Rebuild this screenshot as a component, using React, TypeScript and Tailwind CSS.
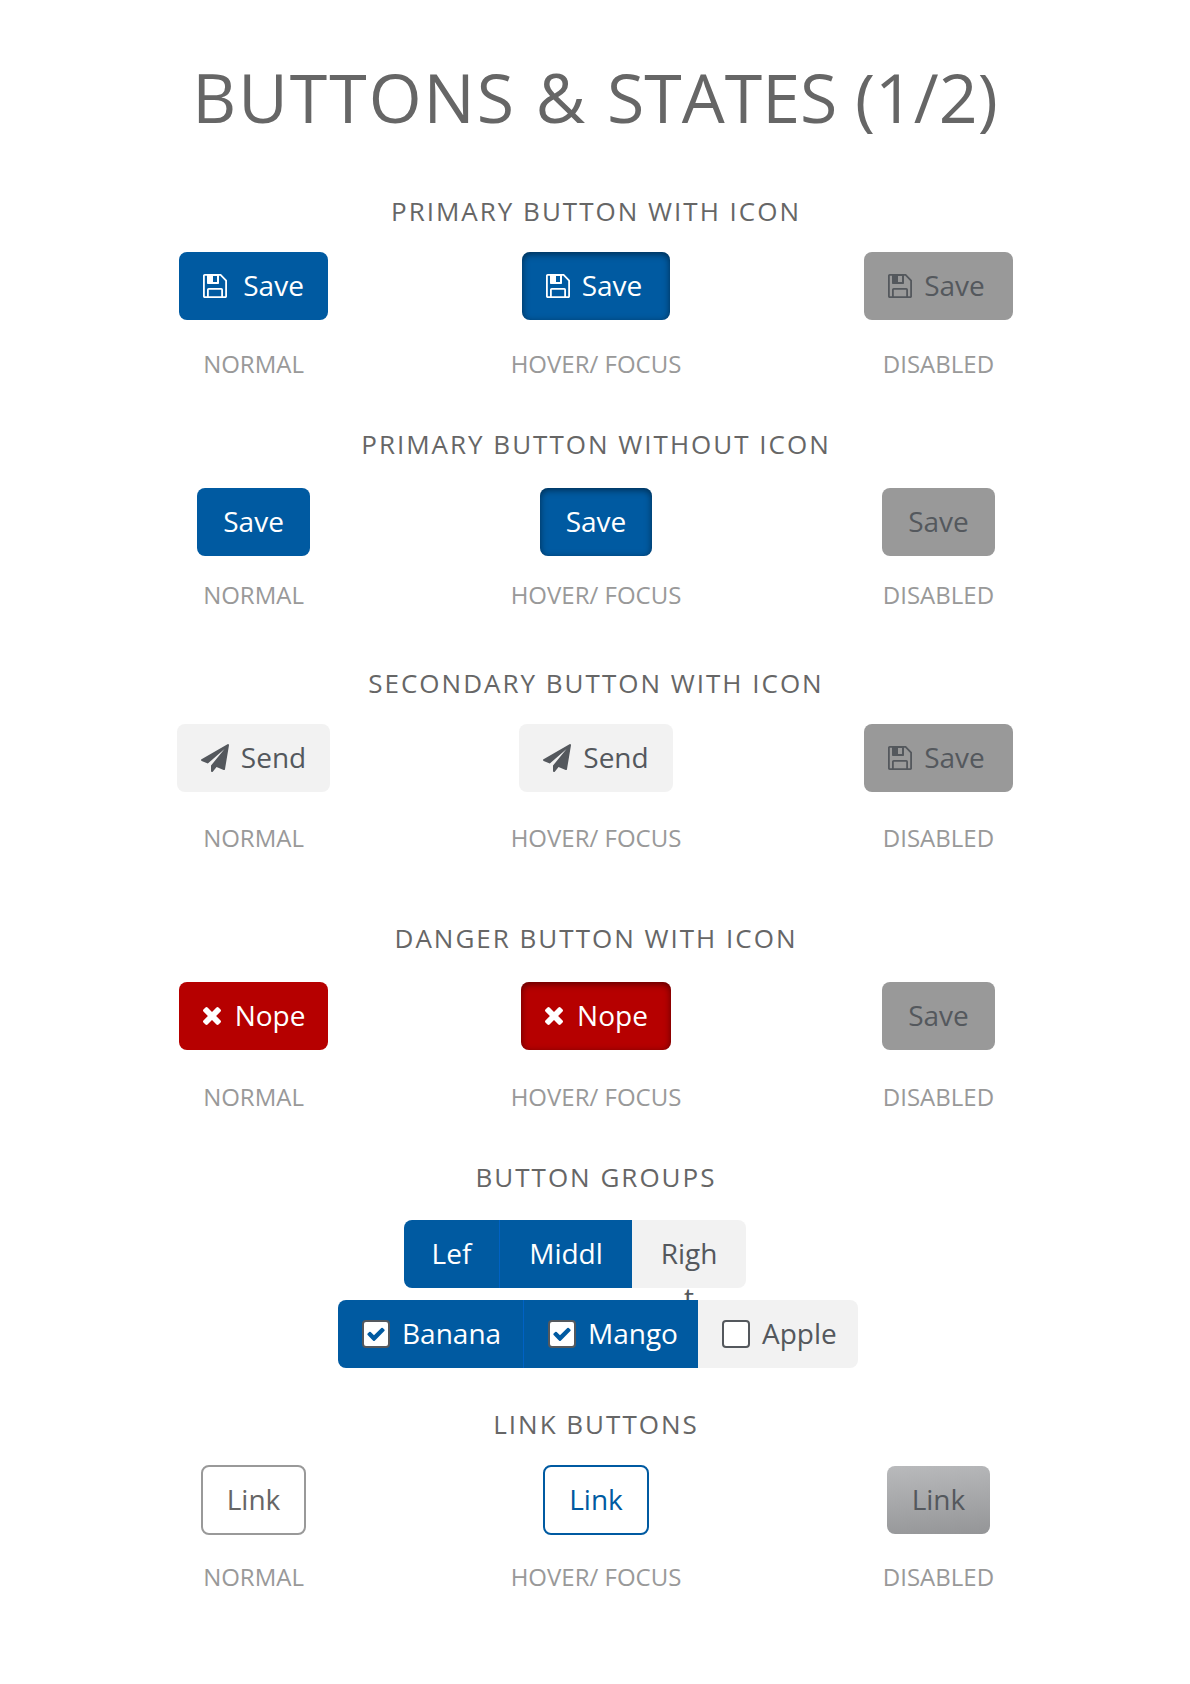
import type { ReactNode } from "react";
import clsx from "clsx";

function SaveIcon() {
  return (
    <svg viewBox="0 0 24 24" className="size-6 shrink-0" fill="currentColor" aria-hidden="true">
      <path
        d="M1.700.9h15.900l5.500 5.600v15.800a.8.8 0 0 1-.8.8H1.700a.8.8 0 0 1-.8-.8V1.700a.8.8 0 0 1 .8-.8Z"
        fill="none"
        stroke="currentColor"
        strokeWidth="1.8"
      />
      <path d="M4 .8h12v8.400a.8.8 0 0 1-.8.8H4.800a.8.8 0 0 1-.8-.8V.8Zm6 1.200v6h4v-6h-4Z" fillRule="evenodd" />
      <path
        d="M4.900 23.100v-7.400a.8.8 0 0 1 .8-.8h12.600a.8.8 0 0 1 .8.8v7.400"
        fill="none"
        stroke="currentColor"
        strokeWidth="1.8"
      />
    </svg>
  );
}

function SendIcon() {
  return (
    <svg viewBox="0 0 1792 1792" className="size-7 shrink-0" fill="currentColor" aria-hidden="true">
      <path d="M1764 11q33 24 27 64l-256 1536q-5 29-32 45-14 8-31 8-11 0-24-5l-453-185-242 295q-18 23-49 23-13 0-22-4-19-7-30.500-23.500t-11.500-36.500v-349l864-1059-1069 925-395-162q-37-14-40-55-2-40 32-59l1664-960q15-9 32-9 20 0 36 11z" />
    </svg>
  );
}

function CrossIcon() {
  return (
    <svg viewBox="302 366 1188 1188" className="size-[18px] shrink-0" fill="currentColor" aria-hidden="true">
      <path d="M1490 1322q0 40-28 68l-136 136q-28 28-68 28t-68-28l-294-294-294 294q-28 28-68 28t-68-28l-136-136q-28-28-28-68t28-68l294-294-294-294q-28-28-28-68t28-68l136-136q28-28 68-28t68 28l294 294 294-294q28-28 68-28t68 28l136 136q28 28 28 68t-28 68l-294 294 294 294q28 28 28 68z" />
    </svg>
  );
}

const variants = {
  primary: "bg-[#005aa1] text-white",
  primaryActive: "bg-[#005aa1] text-white shadow-[inset_0_2px_7px_rgba(0,0,0,0.5)]",
  secondary: "bg-[#f2f2f2] text-[#54585d]",
  danger: "bg-[#b60000] text-white",
  dangerActive: "bg-[#b60000] text-white shadow-[inset_0_2px_7px_rgba(0,0,0,0.5)]",
  disabled: "bg-[#999999] text-[#54585d]",
};

type ButtonProps = {
  variant: keyof typeof variants;
  icon?: ReactNode;
  spacing?: string;
  children: ReactNode;
};

function Button({ variant, icon, spacing = "px-[26px]", children }: ButtonProps) {
  return (
    <button
      type="button"
      disabled={variant === "disabled"}
      className={clsx(
        "flex h-[68px] items-center rounded-lg text-[28px] leading-10",
        spacing,
        variants[variant],
      )}
    >
      {icon}
      <span className="pb-0.5">{children}</span>
    </button>
  );
}

function LinkButton({ className, disabled, children }: { className: string; disabled?: boolean; children: ReactNode }) {
  return (
    <a
      href="#link"
      aria-disabled={disabled}
      className={clsx("flex items-center rounded-lg text-[28px] leading-10", className)}
    >
      <span className="pb-0.5">{children}</span>
    </a>
  );
}

function Heading({ children }: { children: ReactNode }) {
  return (
    <h2 className="pl-0.5 text-center text-[26px] leading-9 tracking-[2px] text-[#666666] uppercase">{children}</h2>
  );
}

type SectionProps = { title: string; className: string; rowClass: string; states: ReactNode[] };

const labels = ["NORMAL", "HOVER/ FOCUS", "DISABLED"];

function Section({ title, className, rowClass, states }: SectionProps) {
  return (
    <section className={className}>
      <Heading>{title}</Heading>
      <div className={clsx("mx-auto grid w-[86.5%] grid-cols-3 pl-0.5", rowClass)}>
        {states.map((state, i) => (
          <div key={i} className="flex items-center justify-center">
            {state}
          </div>
        ))}
        {labels.map((label) => (
          <p key={label} className="text-center text-2xl leading-8 text-[#999999]">
            {label}
          </p>
        ))}
      </div>
    </section>
  );
}

function CheckSegment({ label, checked, className }: { label: string; checked?: boolean; className: string }) {
  return (
    <label className={clsx("flex h-[68px] items-center gap-3 pl-6 text-[28px] leading-10", className)}>
      <span className="relative flex size-7">
        <input
          type="checkbox"
          defaultChecked={checked}
          className="peer size-7 appearance-none rounded border-2 border-[#54585d] bg-white"
        />
        <svg
          viewBox="0 0 1792 1792"
          className="pointer-events-none absolute inset-1 hidden size-5 fill-[#005aa1] peer-checked:block"
          aria-hidden="true"
        >
          <path d="M1671 566q0 40-28 68l-724 724-136 136q-28 28-68 28t-68-28l-136-136-362-362q-28-28-28-68t28-68l136-136q28-28 68-28t68 28l294 295 656-657q28-28 68-28t68 28l136 136q28 28 28 68z" />
        </svg>
      </span>
      <span className="pb-0.5">{label}</span>
    </label>
  );
}

export default function App() {
  return (
    <main className="min-h-screen bg-white pt-[57px] pb-20 font-['Open_Sans',sans-serif]">
      <h1 className="text-center text-[68px] leading-[80px] text-[#666666]">
        <span className="tracking-[2px]">BUTTONS &amp; </span>STATES (1/2)
      </h1>

      <Section
        title="Primary button with icon"
        className="mt-14"
        rowClass="mt-[23px] gap-y-7"
        states={[
          <Button variant="primary" icon={<SaveIcon />} spacing="gap-4 px-6">Save</Button>,
          <Button variant="primaryActive" icon={<SaveIcon />} spacing="gap-3 pl-6 pr-7">Save</Button>,
          <Button variant="disabled" icon={<SaveIcon />} spacing="gap-3 pl-6 pr-7">Save</Button>,
        ]}
      />

      <Section
        title="Primary button without icon"
        className="mt-[46px]"
        rowClass="mt-[26px] gap-y-[23px]"
        states={[
          <Button variant="primary">Save</Button>,
          <Button variant="primaryActive">Save</Button>,
          <Button variant="disabled">Save</Button>,
        ]}
      />

      <Section
        title="Secondary button with icon"
        className="mt-[54px]"
        rowClass="mt-[23px] gap-y-[30px]"
        states={[
          <Button variant="secondary" icon={<SendIcon />} spacing="gap-3 px-6">Send</Button>,
          <Button variant="secondary" icon={<SendIcon />} spacing="gap-3 px-6">Send</Button>,
          <Button variant="disabled" icon={<SaveIcon />} spacing="gap-3 pl-6 pr-7">Save</Button>,
        ]}
      />

      <Section
        title="Danger button with icon"
        className="mt-[66px]"
        rowClass="mt-[26px] gap-y-[31px]"
        states={[
          <Button variant="danger" icon={<CrossIcon />} spacing="gap-3.5 pl-6 pr-[23px]">Nope</Button>,
          <Button variant="dangerActive" icon={<CrossIcon />} spacing="gap-3.5 pl-6 pr-[23px]">Nope</Button>,
          <Button variant="disabled">Save</Button>,
        ]}
      />

      <section className="mt-[46px]">
        <Heading>Button groups</Heading>
        <div className="mt-[25px] flex h-[68px] justify-center pr-10 text-[28px] leading-[44px]">
          <button type="button" className="w-24 rounded-l-lg border-r border-[#0062c4] bg-[#005aa1] pb-0.5 text-white">
            Lef
          </button>
          <button type="button" className="w-[132px] bg-[#005aa1] pb-0.5 text-white">
            Middl
          </button>
          <button
            type="button"
            className="flex w-[114px] items-start justify-center rounded-r-lg bg-[#f2f2f2] px-7 pt-[11px] text-center break-all text-[#54585d]"
          >
            Right
          </button>
        </div>
        <div className="relative mt-3 flex justify-center pl-1.5">
          <CheckSegment
            label="Banana"
            checked
            className="w-[186px] rounded-l-lg border-r border-[#0062c4] bg-[#005aa1] text-white"
          />
          <CheckSegment label="Mango" checked className="w-[174px] bg-[#005aa1] text-white" />
          <CheckSegment label="Apple" className="w-[160px] rounded-r-lg bg-[#f2f2f2] text-[#54585d]" />
        </div>
      </section>

      <Section
        title="Link buttons"
        className="mt-[38px]"
        rowClass="mt-[23px] gap-y-[26px]"
        states={[
          <LinkButton className="h-[70px] border-2 border-[#999999] px-6 text-[#666666]">Link</LinkButton>,
          <LinkButton className="h-[70px] border-2 border-[#005aa1] px-6 text-[#005aa1]">Link</LinkButton>,
          <LinkButton disabled className="h-[68px] bg-linear-[175deg] from-[#b9babc] to-[#949597] px-[25px] text-[#54585d]">
            Link
          </LinkButton>,
        ]}
      />
    </main>
  );
}
